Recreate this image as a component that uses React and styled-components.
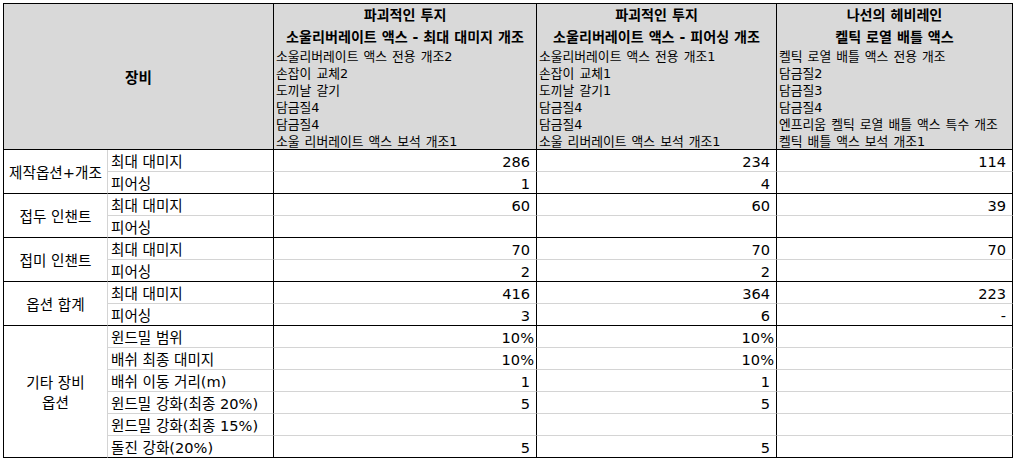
import React from 'react';
import styled, {createGlobalStyle} from 'styled-components';

const GlobalStyle = createGlobalStyle`
  body {
    margin: 0;
    background: #fff;
    font-family: "DejaVu Sans", "Noto Sans CJK KR", sans-serif;
    color: #000;
  }
`;

const LINE = '#000';
const GRID = '#d4d4d4';

const Page = styled.div`
  padding: 3px 0 0 3px;
`;

const Sheet = styled.div`
  display: grid;
  grid-template-columns: 104px 166px 263px 240px 236px;
  grid-template-rows: 146px repeat(14, 22px);
  width: max-content;
  border-top: 1px solid ${LINE};
  border-left: 1px solid ${LINE};
`;

const Cell = styled.div`
  box-sizing: border-box;
  border-right: 1px solid ${p => p.$right || LINE};
  border-bottom: 1px solid ${p => p.$bottom || LINE};
  overflow: hidden;
  white-space: nowrap;
`;

const CornerHead = styled(Cell)`
  grid-column: span 2;
  background: #d9d9d9;
  display: flex;
  align-items: center;
  justify-content: center;
  font-size: 14.6px;
  font-weight: 700;
`;

const ItemHead = styled(Cell)`
  background: #d9d9d9;
  display: flex;
  flex-direction: column;
  justify-content: flex-start;
`;

const TitleLine = styled.div`
  text-align: center;
  font-size: 14.1px;
  font-weight: 700;
  line-height: 22px;
`;

const PartLine = styled.div`
  padding-left: 2px;
  font-size: 12.8px;
  word-spacing: 1px;
  line-height: 17px;
`;

const GroupCell = styled(Cell)`
  grid-row: span ${p => p.$span};
  display: flex;
  flex-direction: column;
  align-items: center;
  justify-content: center;
  font-size: 14.6px;
  line-height: 20px;
  padding-top: 2px;
`;

const LabelCell = styled(Cell)`
  display: flex;
  align-items: flex-end;
  padding-left: 3px;
  font-size: 14.6px;
  line-height: 18px;
`;

const ValueCell = styled(Cell)`
  display: flex;
  align-items: flex-end;
  justify-content: flex-end;
  padding-right: ${p => (p.$pct ? '2px' : '6px')};
  font-size: 14.6px;
  line-height: 18px;
`;

const items = [
  {
    title: ['파괴적인 투지', '소울리버레이트 액스 - 최대 대미지 개조'],
    parts: ['소울리버레이트 액스 전용 개조2', '손잡이 교체2', '도끼날 갈기', '담금질4', '담금질4', '소울 리버레이트 액스 보석 개조1'],
  },
  {
    title: ['파괴적인 투지', '소울리버레이트 액스 - 피어싱 개조'],
    parts: ['소울리버레이트 액스 전용 개조1', '손잡이 교체1', '도끼날 갈기1', '담금질4', '담금질4', '소울 리버레이트 액스 보석 개조1'],
  },
  {
    title: ['나선의 헤비레인', '켈틱 로열 배틀 액스'],
    parts: ['켈틱 로열 배틀 액스 전용 개조', '담금질2', '담금질3', '담금질4', '엔프리움 켈틱 로열 배틀 액스 특수 개조', '켈틱 배틀 액스 보석 개조1'],
  },
];

const groups = [
  {
    name: ['제작옵션+개조'],
    rows: [
      ['최대 대미지', '286', '234', '114'],
      ['피어싱', '1', '4', ''],
    ],
  },
  {
    name: ['접두 인챈트'],
    rows: [
      ['최대 대미지', '60', '60', '39'],
      ['피어싱', '', '', ''],
    ],
  },
  {
    name: ['접미 인챈트'],
    rows: [
      ['최대 대미지', '70', '70', '70'],
      ['피어싱', '2', '2', ''],
    ],
  },
  {
    name: ['옵션 합계'],
    rows: [
      ['최대 대미지', '416', '364', '223'],
      ['피어싱', '3', '6', '-'],
    ],
  },
  {
    name: ['기타 장비', '옵션'],
    rows: [
      ['윈드밀 범위', '10%', '10%', ''],
      ['배쉬 최종 대미지', '10%', '10%', ''],
      ['배쉬 이동 거리(m)', '1', '1', ''],
      ['윈드밀 강화(최종 20%)', '5', '5', ''],
      ['윈드밀 강화(최종 15%)', '', '', ''],
      ['돌진 강화(20%)', '5', '5', ''],
    ],
  },
];

const App = () => {
  return (
    <Page>
      <GlobalStyle />
      <Sheet>
        <CornerHead>장비</CornerHead>
        {items.map((item, i) => (
          <ItemHead key={i}>
            {item.title.map((t, j) => <TitleLine key={j}>{t}</TitleLine>)}
            {item.parts.map((p, j) => <PartLine key={j}>{p}</PartLine>)}
          </ItemHead>
        ))}
        {groups.map((group, g) =>
          group.rows.map((row, r) => {
            const last = r === group.rows.length - 1;
            const bottom = last ? LINE : GRID;
            return (
              <React.Fragment key={`${g}-${r}`}>
                {r === 0 && (
                  <GroupCell $span={group.rows.length} $right={GRID}>
                    {group.name.map((n, k) => <div key={k}>{n}</div>)}
                  </GroupCell>
                )}
                <LabelCell $bottom={bottom}>{row[0]}</LabelCell>
                {row.slice(1).map((v, k) => (
                  <ValueCell key={k} $bottom={bottom} $pct={v.endsWith('%')}>{v}</ValueCell>
                ))}
              </React.Fragment>
            );
          })
        )}
      </Sheet>
    </Page>
  );
};

export default App;
